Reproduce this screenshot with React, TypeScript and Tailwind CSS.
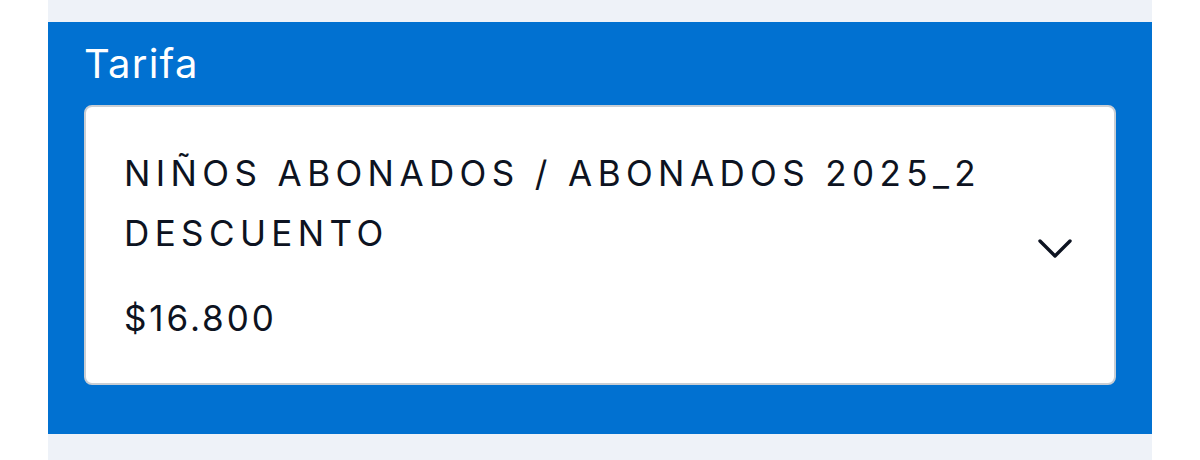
export default function App() {
  return (
    <div className="w-[1200px] h-[460px] bg-white" style={{ fontFamily: "Inter, 'Noto Sans', sans-serif" }}>
      <div className="ml-[48px] w-[1104px] h-[460px] bg-[#eef2f8] pt-[22px]">
        <section className="h-[412px] bg-[#0171d1] px-[36px] pt-[18px]">
          <label className="block text-[40px] leading-[48px] font-normal tracking-[1.2px] text-white">Tarifa</label>
          <button
            type="button"
            className="mt-[17px] flex w-full items-center rounded-[8px] border-2 border-[#c9ced4] bg-white pl-[38px] pr-[42px] pt-[36px] pb-[35px] text-left"
          >
            <div className="flex-1 text-[#0d1321]">
              <div className="text-[35px] leading-[60px] tracking-[5.4px]">
                NIÑOS ABONADOS / ABONADOS 2025_2
                <br />
                DESCUENTO
              </div>
              <div className="mt-[25px] text-[35px] leading-[60px] tracking-[2.9px]">$16.800</div>
            </div>
            <svg width="34" height="19" viewBox="0 0 34 19" className="mt-[5px] shrink-0">
              <polyline
                points="2,2 17,17 32,2"
                fill="none"
                stroke="#0d1321"
                strokeWidth="3.4"
                strokeLinecap="round"
                strokeLinejoin="round"
              />
            </svg>
          </button>
        </section>
      </div>
    </div>
  );
}
